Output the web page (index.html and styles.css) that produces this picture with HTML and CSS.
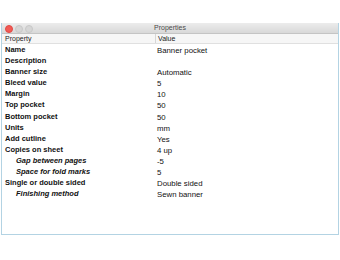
FILE: index.html
```html
<!DOCTYPE html>
<html>
<head>
<meta charset="utf-8">
<link rel="stylesheet" href="styles.css">
</head>
<body>
<div class="window">
  <div class="titlebar">
    <div class="lights">
      <span class="light red"></span>
      <span class="light"></span>
      <span class="light"></span>
    </div>
    <div class="title">Properties</div>
  </div>
  <div class="header">
    <div class="hcol prop">Property</div>
    <div class="hcol val">Value</div>
  </div>
  <div class="rows">
    <div class="row"><div class="k">Name</div><div class="v">Banner pocket</div></div>
    <div class="row"><div class="k">Description</div><div class="v"></div></div>
    <div class="row"><div class="k">Banner size</div><div class="v">Automatic</div></div>
    <div class="row"><div class="k">Bleed value</div><div class="v">5</div></div>
    <div class="row"><div class="k">Margin</div><div class="v">10</div></div>
    <div class="row"><div class="k">Top pocket</div><div class="v">50</div></div>
    <div class="row"><div class="k">Bottom pocket</div><div class="v">50</div></div>
    <div class="row"><div class="k">Units</div><div class="v">mm</div></div>
    <div class="row"><div class="k">Add cutline</div><div class="v">Yes</div></div>
    <div class="row"><div class="k">Copies on sheet</div><div class="v">4 up</div></div>
    <div class="row"><div class="k sub">Gap between pages</div><div class="v">-5</div></div>
    <div class="row"><div class="k sub">Space for fold marks</div><div class="v">5</div></div>
    <div class="row"><div class="k">Single or double sided</div><div class="v">Double sided</div></div>
    <div class="row"><div class="k sub">Finishing method</div><div class="v">Sewn banner</div></div>
  </div>
</div>
</body>
</html>
```

FILE: styles.css
```css
html, body {
  margin: 0;
  padding: 0;
  background: #ffffff;
}
body {
  font-family: "Liberation Sans", Arial, sans-serif;
  color: #111;
}
.window {
  margin: 23px 0 0 1px;
  width: 336px;
  height: 211px;
  border: 1px solid #b3d3e3;
  border-top: none;
  display: flex;
  flex-direction: column;
  background: #fff;
}
.titlebar {
  height: 10px;
  background: linear-gradient(#ececec, #d8d8d8);
  border-bottom: 1px solid #c4c4c4;
  position: relative;
  display: flex;
  align-items: center;
  justify-content: center;
}
.lights {
  position: absolute;
  left: 3px;
  top: 2px;
  display: flex;
  gap: 2px;
}
.light {
  width: 6px;
  height: 6px;
  border-radius: 50%;
  background: #d6d6d6;
  border: 0.5px solid #c8c8c8;
}
.light.red {
  background: #f25a55;
  border-color: #e04a44;
}
.title {
  font-size: 7px;
  color: #4a4a4a;
  line-height: 10px;
}
.header {
  display: flex;
  height: 9px;
  background: #f6f6f6;
  border-bottom: 1px solid #e0e0e0;
  font-size: 7px;
  line-height: 9px;
  color: #222;
}
.hcol.prop {
  width: 150px;
  padding-left: 3px;
  border-right: 1px solid #d6d6d6;
}
.hcol.val {
  padding-left: 2px;
}
.row {
  display: flex;
  height: 11.1px;
  line-height: 11.1px;
}
.k {
  width: 152px;
  padding-left: 3px;
  font-weight: bold;
  font-size: 7.5px;
  white-space: nowrap;
}
.k.sub {
  padding-left: 14px;
  width: 141px;
  font-style: italic;
}
.v {
  font-size: 7.8px;
  white-space: nowrap;
  padding-top: 1px;
}
```
